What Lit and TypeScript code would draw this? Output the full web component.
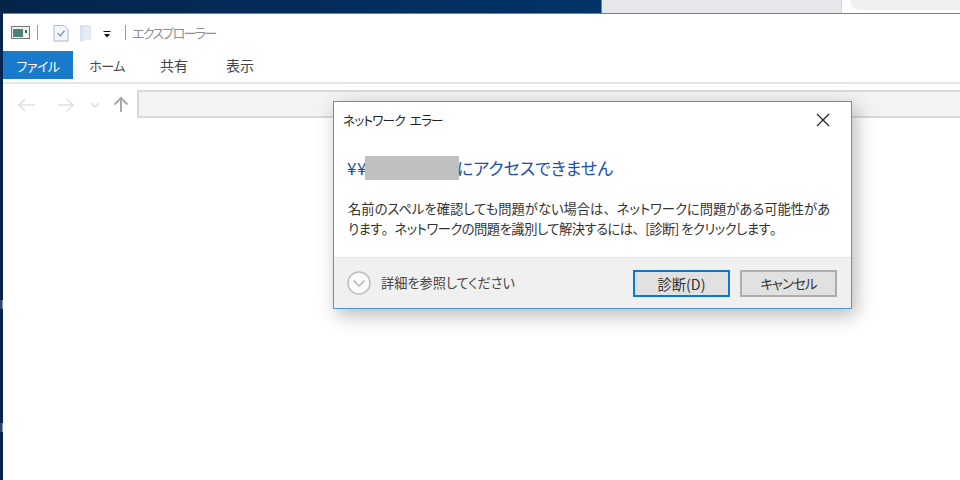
import { LitElement, html, css } from "lit";
import { customElement } from "lit/decorators.js";

@customElement("app-root")
export class AppRoot extends LitElement {
  static styles = css`
    :host { display: block; width: 960px; height: 480px; overflow: hidden; position: relative; background: #fff;
      font-family: "Noto Sans CJK JP", "Noto Sans", sans-serif; color: #333; font-feature-settings: "palt"; }
    .desk { height: 13px; display: flex; background: #03305f; }
    .desk .blue { width: 602px; background: linear-gradient(90deg,#04254a,#03336a); border-right: 1px solid #3f8fd0; box-sizing: border-box; }
    .desk .gray { width: 240px; background: #e6e7eb; border-right: 1px solid #d6d6d8; box-sizing: border-box; }
    .desk .white { flex: 1; background: #fff; position: relative; overflow: hidden; }
    .desk .pill { position: absolute; left: 8px; top: -10px; width: 120px; height: 20px; border-radius: 10px; background: #f0f0f2; }
    .body { display: flex; height: 467px; }
    .strip { width: 3px; background: #06254c; flex: none; position: relative; }
    .mark { position: absolute; left: 0; width: 3px; height: 9px; border-right: 1px solid #8a9db0; background: #2a4a6c; box-sizing: border-box; }
    .win { flex: 1; border-top: 1px solid #7b7d80; display: flex; flex-direction: column; min-width: 0; }
    .title { height: 37px; display: flex; align-items: center; padding-left: 8px; font-size: 13px; color: #8e8e8e; }
    .title svg { display: block; flex: none; }
    .title-text { margin-left: 6px; letter-spacing: -1.700px; }
    .sep { width: 1px; height: 15px; background: #9a9a9a; flex: none; }
    .tabs { height: 28px; display: flex; font-size: 14px; color: #444; }
    .tab { display: flex; align-items: center; justify-content: center; }
    .tab.file { width: 70px; background: #1979ca; color: #fff; font-size: 13px; letter-spacing: -0.5px; }
    .tab.home { width: 68px; font-size: 13px; letter-spacing: -0.5px; }
    .tab.share { width: 58px; margin-left: 4px; }
    .tab.view { width: 66px; margin-left: 4px; }
    .ribbon { height: 3px; border-bottom: 2px solid #e6e6e6; }
    .nav { display: flex; align-items: flex-start; padding-top: 6px; }
    .icons { width: 134px; height: 28px; flex: none; }
    .addr { flex: 1; height: 28px; box-sizing: border-box; background: #f3f3f3; border: 2px solid #dadada; border-right: none; }
    .dialog { position: absolute; left: 333px; top: 101px; width: 519px; height: 208px; box-sizing: border-box;
      border: 1px solid #4a9ad8; background: #fff; display: flex; flex-direction: column;
      box-shadow: 4px 6px 18px rgba(0,0,0,.28); }
    .dh { height: 35px; display: flex; align-items: center; justify-content: space-between; padding: 0 21px 0 9px; font-size: 12.600px; letter-spacing: -0.8px; word-spacing: 3px; color: #222; }
    .dh svg { display: block; }
    .main { flex: 1; padding: 19px 14px 0 13px; min-height: 0; }
    .head { display: flex; align-items: center; font-size: 17px; color: #1d50a8; height: 24px; }
    .yen { width: 18px; flex: none; white-space: nowrap; letter-spacing: 0.5px; padding-bottom: 2px; }
    .mask { width: 94px; height: 24px; background: #c0c0c0; flex: none; }
    .after { margin-left: -2px; padding-bottom: 2px; }
    .msg { margin: 19px 0 0 1px; font-size: 13.300px; line-height: 20px; color: #333; white-space: nowrap; }
    .l2 { letter-spacing: -0.52px; }
    .p { font-feature-settings: normal; }
    .foot { height: 50px; flex: none; background: #f0f0f0; border-top: 1px solid #e8e8e8; display: flex; align-items: center; padding: 0 14px 0 13px; font-size: 13.200px; }
    .foot svg { display: block; }
    .more { margin-left: 10px; flex: 1; color: #444; padding-bottom: 2px; }
    .btn { height: 27px; box-sizing: border-box; background: #e1e1e1; border: 2px solid #adadad; display: flex; align-items: center; justify-content: center; font-size: 14.300px; color: #333; }
    .btn.ok { width: 97px; border-color: #0a78d7; margin-right: 10px; }
    .btn.no { width: 97px; font-size: 13.500px; letter-spacing: -1px; }
  `;

  render() {
    return html`
      <div class="desk"><div class="blue"></div><div class="gray"></div><div class="white"><div class="pill"></div></div></div>
      <div class="body">
        <div class="strip"><div class="mark" style="top:287px"></div><div class="mark" style="top:410px"></div></div>
        <div class="win">
          <div class="title">
            <svg width="20" height="16" viewBox="0 0 20 16">
              <rect x="0.5" y="1.500" width="18" height="12" fill="#eee" stroke="#777"/>
              <rect x="2" y="4" width="10" height="8" fill="#4a8478"/>
              <rect x="13" y="4" width="4" height="8" fill="#fff"/>
              <rect x="14" y="5" width="2" height="3" fill="#2a6a4a"/>
            </svg>
            <div class="sep" style="margin-left:6px"></div>
            <svg style="margin-left:15px" width="16" height="18" viewBox="0 0 16 18">
              <path d="M1 1.500h10l4 4v11.500H1z" fill="#f3f6fb" stroke="#a9b7cf"/>
              <path d="M4.500 9l3 3 4-5.500" fill="none" stroke="#7f97bd" stroke-width="1.300"/>
            </svg>
            <svg style="margin-left:10px" width="14" height="18" viewBox="0 0 14 18">
              <path d="M1 1h9l2 2v12l-7 1.500-1 1H1z" fill="#d9e3f2"/>
              <path d="M4 3h7v11l-7 2z" fill="#e6ecf7"/>
            </svg>
            <svg style="margin-left:9px;position:relative;top:2px" width="10" height="10" viewBox="0 0 10 10">
              <rect x="1.500" y="1" width="7" height="1" fill="#111"/>
              <path d="M2 4h6L5 7.500z" fill="#111"/>
            </svg>
            <div class="sep" style="margin-left:13px"></div>
            <span class="title-text">エクスプローラー</span>
          </div>
          <div class="tabs">
            <div class="tab file">ファイル</div>
            <div class="tab home">ホーム</div>
            <div class="tab share">共有</div>
            <div class="tab view">表示</div>
          </div>
          <div class="ribbon"></div>
          <div class="nav">
            <svg class="icons" viewBox="0 0 134 28">
              <g fill="none" stroke="#dedede" stroke-width="1.500">
                <path d="M16 15H32M22 9l-6 6 6 6"/>
                <path d="M55 15H70M64 9l6 6-6 6"/>
                <path d="M88 13l4 4 4-4"/>
              </g>
              <path d="M118 22V8M111.500 14.500l6.500-6.500 6.500 6.500" fill="none" stroke="#aaa" stroke-width="2"/>
            </svg>
            <div class="addr"></div>
          </div>
        </div>
      </div>
      <div class="dialog">
        <div class="dh">
          <span>ネットワーク エラー</span>
          <svg width="14" height="14" viewBox="0 0 14 14"><path d="M1 1l12 12M13 1L1 13" stroke="#222" stroke-width="1.200" fill="none"/></svg>
        </div>
        <div class="main">
          <div class="head"><span class="yen">¥¥</span><div class="mask"></div><span class="after">にアクセスできません</span></div>
          <p class="msg">名前のスペルを確認しても問題がない場合は<span class="p">、</span>ネットワークに問題がある可能性があ<br><span class="l2">ります<span class="p">。</span>ネットワークの問題を識別して解決するには<span class="p">、</span>[診断] をクリックします<span class="p">。</span></span></p>
        </div>
        <div class="foot">
          <svg width="24" height="24" viewBox="0 0 24 24">
            <circle cx="12" cy="12" r="11" fill="#fbfbfb" stroke="#bdbdbd" stroke-width="1.500"/>
            <path d="M6.500 9.500l5.500 5.500 5.500-5.500" fill="none" stroke="#b5b5b5" stroke-width="1.500"/>
          </svg>
          <span class="more">詳細を参照してください</span>
          <div class="btn ok">診断(D)</div>
          <div class="btn no">キャンセル</div>
        </div>
      </div>
    `;
  }
}
